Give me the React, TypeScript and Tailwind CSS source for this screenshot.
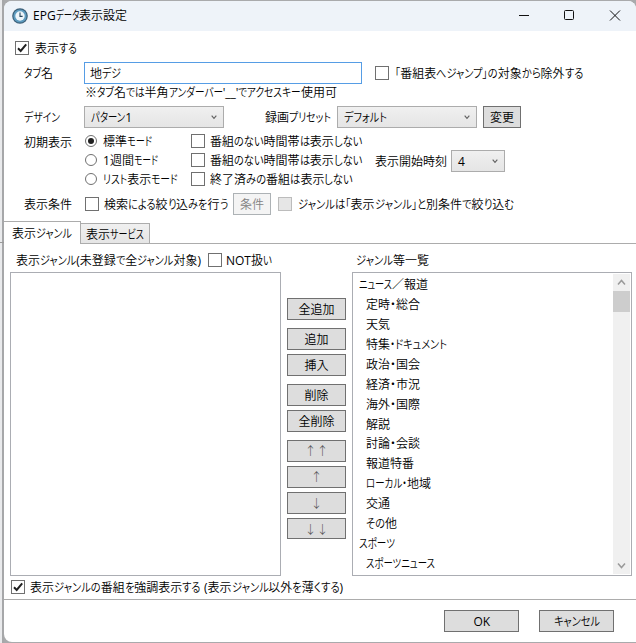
import { useLayoutEffect, useRef, type ReactNode } from "react";

// Kana and Japanese brackets are condensed, ideographs keep their full width.
const RUNS = /([\u3041-\u30ff「」]+|[\x21-\x7e]+)/;
const LATIN = /^[\x21-\x7e]/;

function Text({ s, w, className = "" }: { s: string; w: number; className?: string }) {
  const ref = useRef<HTMLSpanElement>(null);
  useLayoutEffect(() => {
    const el = ref.current;
    if (!el) return;
    const inner = el.firstElementChild as HTMLElement;
    const runs = Array.from(el.querySelectorAll<HTMLElement>("[data-kana]"));
    runs.forEach((r) => {
      r.style.transform = "";
      r.style.marginRight = "";
    });
    const total = inner.getBoundingClientRect().width;
    const widths = runs.map((r) => r.getBoundingClientRect().width);
    const kana = widths.reduce((a, b) => a + b, 0);
    if (kana === 0) return;
    const k = (w - (total - kana)) / kana;
    runs.forEach((r, i) => {
      r.style.transform = `scaleX(${k})`;
      r.style.marginRight = `${widths[i] * (k - 1)}px`;
    });
  }, [s, w]);
  return (
    <span ref={ref} className={`block h-4 shrink-0 whitespace-nowrap leading-[18px] ${className}`} style={{ width: w }}>
      <span className="inline-block">
        {s.split(RUNS).map((p, i) => {
          if (p === "") return null;
          if (LATIN.test(p))
            return (
              <span key={i} className="font-normal">
                {p}
              </span>
            );
          return i % 2 ? (
            <span key={i} data-kana="" className="inline-block origin-left">
              {p}
            </span>
          ) : (
            <span key={i} className="whitespace-pre">
              {p}
            </span>
          );
        })}
      </span>
    </span>
  );
}

function Check({ on, disabled }: { on?: boolean; disabled?: boolean }) {
  return (
    <span
      className={`flex h-[14px] w-[14px] shrink-0 items-center justify-center border ${
        disabled ? "border-[#bcbcbc] bg-[#e6e6e6]" : "border-[#707070] bg-white"
      }`}
    >
      {on && (
        <svg width="12" height="12" viewBox="0 0 12 12" fill="none" stroke="#212121" strokeWidth="2">
          <path d="M2 6.2 4.7 8.9 10.2 2.4" />
        </svg>
      )}
    </span>
  );
}

function Radio({ on }: { on?: boolean }) {
  return (
    <span className="flex h-3 w-3 shrink-0 items-center justify-center rounded-full border border-[#707070] bg-white">
      {on && <span className="h-1.5 w-1.5 rounded-full bg-[#212121]" />}
    </span>
  );
}

function Chevron({ up, big }: { up?: boolean; big?: boolean }) {
  const size = big ? 9 : 6;
  return (
    <svg
      width={size}
      height={size}
      viewBox="0 0 9 9"
      fill="none"
      stroke={big ? "#9a9a9a" : "#606060"}
      strokeWidth={big ? 1.5 : 1.7}
    >
      <path d={up ? "M1 6.5 4.5 2.5 8 6.5" : "M1 2.5 4.5 6.5 8 2.5"} />
    </svg>
  );
}

function Combo({ children, className }: { children: ReactNode; className: string }) {
  return (
    <div
      className={`flex h-[22px] shrink-0 items-center justify-between border border-[#acacac] bg-linear-to-b from-[#f0f0f0] to-[#e5e5e5] pr-[6px] pl-[6px] ${className}`}
    >
      {children}
      <Chevron />
    </div>
  );
}

function Button({ s, w, className }: { s: string; w: number; className: string }) {
  return (
    <button
      className={`flex shrink-0 items-center justify-center border border-[#707070] bg-[#dddddd] ${className}`}
    >
      <Text s={s} w={w} />
    </button>
  );
}

const genres: [string, number, boolean][] = [
  ["ニュース／報道", 69, false],
  ["定時・総合", 54, true],
  ["天気", 24, true],
  ["特集・ドキュメント", 81, true],
  ["政治・国会", 54, true],
  ["経済・市況", 54, true],
  ["海外・国際", 54, true],
  ["解説", 24, true],
  ["討論・会談", 54, true],
  ["報道特番", 48, true],
  ["ローカル・地域", 65, true],
  ["交通", 24, true],
  ["その他", 31, true],
  ["スポーツ", 36, false],
  ["スポーツニュース", 69, true],
];

export default function App() {
  return (
    <div className="flex h-[643px] w-[636px] overflow-hidden bg-[#a9aaac] text-[12px] [font-weight:350] text-black [font-family:'Open_Sans','Noto_Sans_CJK_JP',sans-serif] [font-feature-settings:'palt']">
      <div className="flex w-[4px] shrink-0 flex-col bg-linear-to-r from-[#e9eaec] from-50% to-[#a6a7a9] to-50%">
        <div className="mt-[242px] h-px bg-[#9a9a9a]" />
      </div>
      <div className="mt-px flex h-[641px] w-[632px] shrink-0 flex-col overflow-hidden rounded-tl-[8px] rounded-tr-[8px] rounded-bl-[8px] bg-white">
        <header className="flex h-[30px] shrink-0 items-center bg-[#eef3f9] pl-[8px]">
          <svg width="16" height="16" viewBox="0 0 16 16">
            <circle cx="8" cy="8" r="7.8" fill="#3b5f78" />
            <circle cx="8" cy="8" r="6.6" fill="#5e9cc0" />
            <circle cx="8" cy="8" r="4.7" fill="#edf5fa" />
            <path d="M8 4.6V8.4H10.6" fill="none" stroke="#26465c" strokeWidth="1.1" />
          </svg>
          <Text s="EPGデータ表示設定" w={94} className="mb-[2px] ml-[5px]" />
          <svg className="ml-auto" width="117" height="30" viewBox="0 0 117 30" fill="none" stroke="#111" strokeWidth="1">
            <path d="M0 14.5H10" />
            <rect x="45.5" y="9.5" width="9" height="9" rx="1" />
            <path d="M91 9.5 101 19.5M101 9.5 91 19.5" />
          </svg>
        </header>

        <div className="mt-[9px] flex h-4 items-center pl-[11px]">
          <Check on />
          <Text s="表示する" w={42} className="ml-[6px]" />
        </div>

        <div className="mt-[6px] flex h-[22px] items-center pl-[20px]">
          <Text s="タブ名" w={29} />
          <div className="ml-[31px] flex h-[22px] w-[278px] items-center border border-[#569de5] bg-white pl-[5px]">
            <Text s="地デジ" w={31} />
          </div>
          <span className="ml-[13px]">
            <Check />
          </span>
          <Text s="「番組表へジャンプ」の対象から除外する" w={188} className="ml-[6px]" />
        </div>
        <div className="flex h-[16px] items-center pl-[81px]">
          <Text s="※タブ名では半角アンダーバー'__'でアクセスキー使用可" w={252} />
        </div>

        <div className="mt-[6px] flex h-[22px] items-center pl-[20px]">
          <Text s="デザイン" w={36} />
          <Combo className="ml-[24px] w-[140px]">
            <Text s="パターン1" w={41} />
          </Combo>
          <Text s="録画プリセット" w={66} className="ml-[41px]" />
          <Combo className="ml-[6px] w-[140px]">
            <Text s="デフォルト" w={43} />
          </Combo>
          <Button s="変更" w={24} className="ml-[6px] h-[22px] w-[38px]" />
        </div>

        <div className="mt-[3px] flex h-[60px] pl-[20px]">
          <Text s="初期表示" w={48} className="mt-[3px]" />
          <div className="ml-[13px] flex w-[106px] flex-col">
            <div className="flex h-[19px] items-center gap-[6px] pt-px">
              <Radio on />
              <Text s="標準モード" w={49} />
            </div>
            <div className="flex h-[19px] items-center gap-[6px] pt-px">
              <Radio />
              <Text s="1週間モード" w={55} />
            </div>
            <div className="flex h-[19px] items-center gap-[6px] pt-px">
              <Radio />
              <Text s="リスト表示モード" w={75} />
            </div>
          </div>
          <div className="flex w-[172px] flex-col">
            <div className="flex h-[19px] items-center gap-[5px] pt-px">
              <Check />
              <Text s="番組のない時間帯は表示しない" w={152} />
            </div>
            <div className="flex h-[19px] items-center gap-[5px] pt-px">
              <Check />
              <Text s="番組のない時間帯は表示しない" w={152} />
            </div>
            <div className="flex h-[19px] items-center gap-[5px] pt-px">
              <Check />
              <Text s="終了済みの番組は表示しない" w={143} />
            </div>
          </div>
          <div className="mt-[19px] ml-[12px] flex h-[22px] items-center">
            <Text s="表示開始時刻" w={72} />
            <Combo className="ml-[4px] w-[54px]">
              <Text s="4" w={8} />
            </Combo>
          </div>
        </div>

        <div className="mt-[2px] flex h-[22px] items-center pl-[20px]">
          <Text s="表示条件" w={48} />
          <span className="ml-[13px]">
            <Check />
          </span>
          <Text s="検索による絞り込みを行う" w={124} className="ml-[5px]" />
          <div className="ml-[5px] flex h-[22px] w-[38px] shrink-0 items-center justify-center border border-[#adb2b5] bg-[#f4f4f4] text-[#838383]">
            <Text s="条件" w={24} />
          </div>
          <span className="ml-[7px]">
            <Check disabled />
          </span>
          <Text s="ジャンルは「表示ジャンル」と別条件で絞り込む" w={216} className="ml-[6px]" />
        </div>

        <div className="mt-[6px] flex h-[23px] shrink-0 items-end">
          <div className="flex h-[23px] w-[77px] items-center border-t border-r border-[#acacac] bg-white pl-[8px]">
            <Text s="表示ジャンル" w={60} />
          </div>
          <div className="flex h-[23px] flex-1 items-end border-b border-[#acacac]">
            <div className="flex h-[20px] w-[69px] items-center border-t border-r border-[#acacac] bg-linear-to-b from-[#f0f0f0] to-[#e5e5e5] pl-[5px]">
              <Text s="表示サービス" w={58} />
            </div>
          </div>
        </div>

        <div className="mt-[7px] flex h-[17px] items-center pl-[12px]">
          <Text s="表示ジャンル(未登録で全ジャンル対象)" w={185} />
          <span className="ml-[7px]">
            <Check />
          </span>
          <Text s="NOT扱い" w={46} className="ml-[4px]" />
          <Text s="ジャンル等一覧" w={73} className="ml-[84px]" />
        </div>

        <div className="mt-[4px] flex h-[304px] shrink-0 pl-[6px]">
          <div className="h-[304px] w-[271px] shrink-0 border border-[#abadb3] bg-white" />
          <div className="mt-[26px] ml-[6px] flex w-[59px] flex-col">
            <Button s="全追加" w={36} className="h-[22px]" />
            <Button s="追加" w={24} className="mt-[8px] h-[22px]" />
            <Button s="挿入" w={24} className="mt-[4px] h-[22px]" />
            <Button s="削除" w={24} className="mt-[8px] h-[22px]" />
            <Button s="全削除" w={36} className="mt-[4px] h-[22px]" />
            <Button s="↑↑" w={24} className="mt-[8px] h-[22px] font-light text-[#555]" />
            <Button s="↑" w={12} className="mt-[4px] h-[22px] font-light text-[#555]" />
            <Button s="↓" w={12} className="mt-[4px] h-[22px] font-light text-[#555]" />
            <Button s="↓↓" w={24} className="mt-[4px] h-[21px] font-light text-[#555]" />
          </div>
          <div className="ml-[6px] flex h-[304px] w-[280px] shrink-0 border border-[#abadb3] bg-white p-px">
            <ul className="flex-1 overflow-hidden">
              {genres.map(([s, w, sub]) => (
                <li key={s} className={`flex h-[19.95px] items-center ${sub ? "pl-[12px]" : "pl-[5px]"}`}>
                  <Text s={s} w={w} />
                </li>
              ))}
            </ul>
            <div className="flex h-[300px] w-[17px] flex-col bg-[#f0f0f0]">
              <div className="flex h-[17px] items-center justify-center">
                <Chevron up big />
              </div>
              <div className="h-[21px] bg-[#cdcdcd]" />
              <div className="mt-auto flex h-[17px] items-center justify-center">
                <Chevron big />
              </div>
            </div>
          </div>
        </div>

        <div className="mt-[3px] flex h-[16px] shrink-0 items-center pl-[7px]">
          <Check on />
          <Text s="表示ジャンルの番組を強調表示する (表示ジャンル以外を薄くする)" w={313} className="ml-[5px]" />
        </div>
        <div className="mt-[4px] h-px shrink-0 bg-[#acacac]" />
        <footer className="mt-[10px] flex gap-[20px] pl-[440px]">
          <Button s="OK" w={16} className="h-[22px] w-[75px]" />
          <Button s="キャンセル" w={46} className="h-[22px] w-[75px]" />
        </footer>
      </div>
    </div>
  );
}
